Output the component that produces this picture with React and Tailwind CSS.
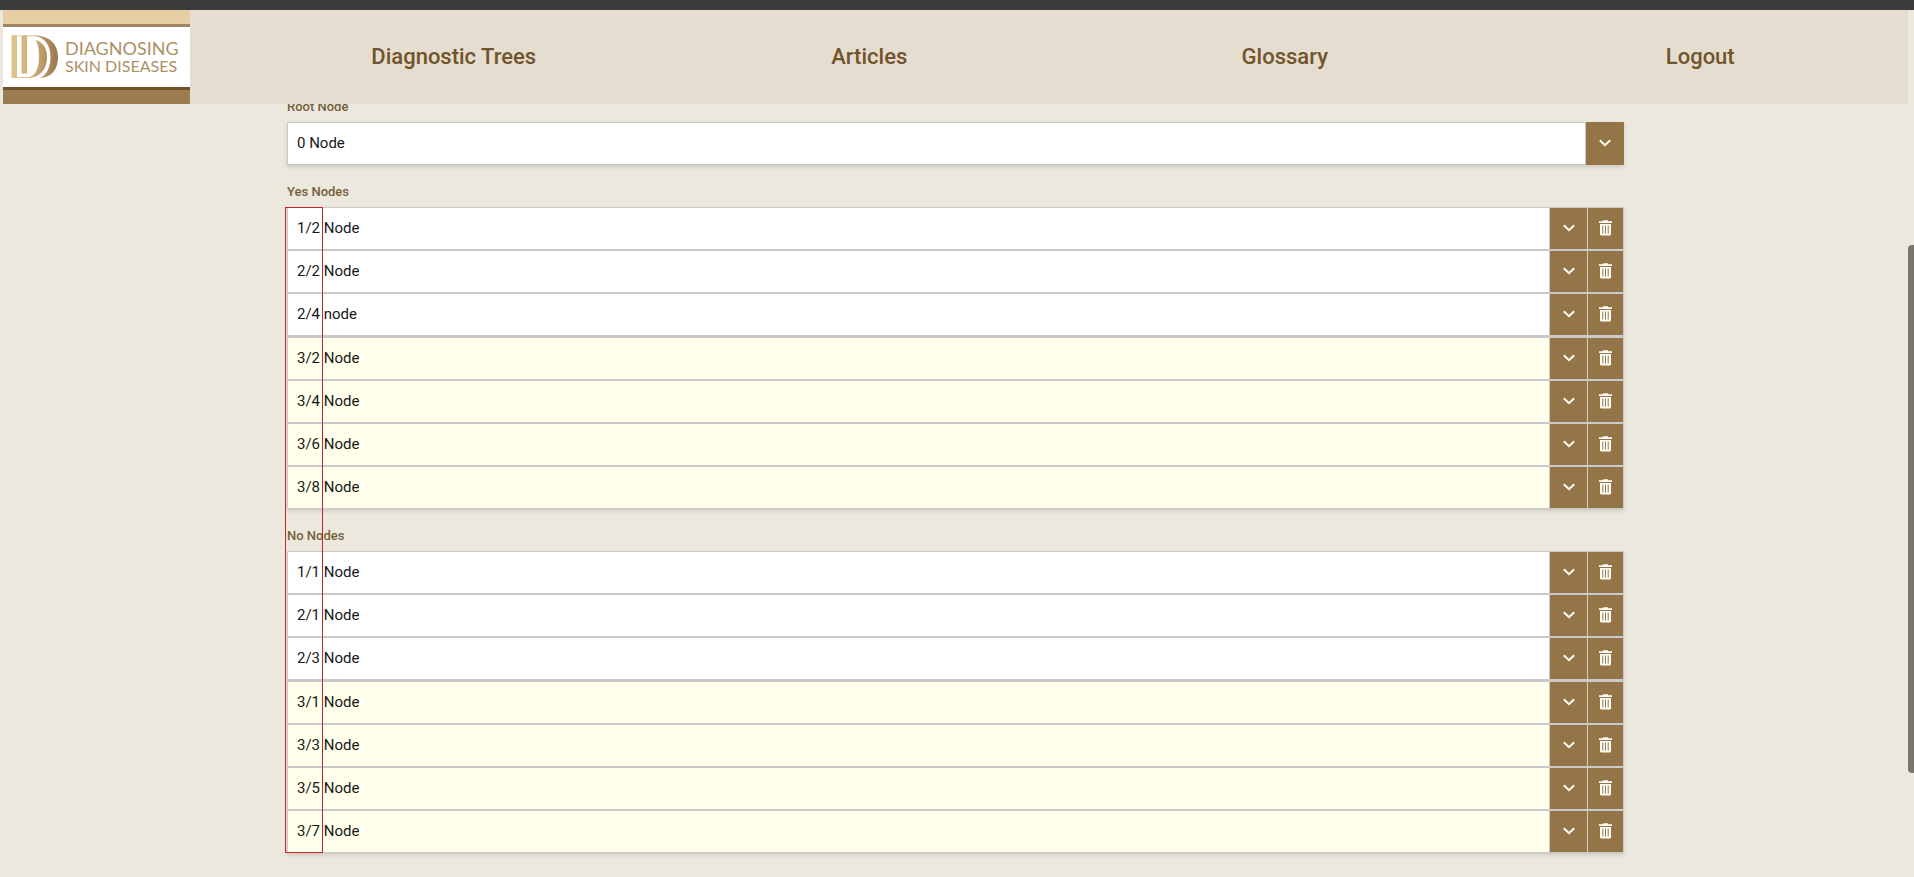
import React from "react";

const navItems = ["Diagnostic Trees", "Articles", "Glossary", "Logout"];

const yesNodes = {
  saved: ["1/2 Node", "2/2 Node", "2/4 node"],
  pending: ["3/2 Node", "3/4 Node", "3/6 Node", "3/8 Node"],
};

const noNodes = {
  saved: ["1/1 Node", "2/1 Node", "2/3 Node"],
  pending: ["3/1 Node", "3/3 Node", "3/5 Node", "3/7 Node"],
};

function ChevronIcon() {
  return (
    <svg width="12" height="8" viewBox="0 0 12 8" fill="none" stroke="#fffdf6" strokeWidth="1.9" aria-hidden="true">
      <path d="M0.800 1.200 L6 6.200 L11.200 1.200" />
    </svg>
  );
}

function TrashIcon() {
  return (
    <svg width="13" height="16" viewBox="0 0 13 16" fill="#fffdf6" aria-hidden="true">
      <path d="M4.300 0.300h4.400l0.600 1H13v1.700H0V1.300h3.700z" />
      <path
        fillRule="evenodd"
        d="M1 4h11v10a1.500 1.500 0 0 1-1.500 1.500h-8A1.500 1.500 0 0 1 1 14zM3.300 5.500v8h1v-8zM6 5.500v8h1v-8zM8.700 5.500v8h1v-8z"
      />
    </svg>
  );
}

function LogoMark() {
  return (
    <svg width="48" height="44" viewBox="0 0 48 44" aria-hidden="true">
      <defs>
        <linearGradient id="gold" gradientUnits="userSpaceOnUse" x1="0" x2="48" y1="0" y2="0">
          <stop offset="0" stopColor="#e2c48f" />
          <stop offset="0.5" stopColor="#c9aa76" />
          <stop offset="1" stopColor="#94754a" />
        </linearGradient>
      </defs>
      <g fill="url(#gold)">
        <path d="M0.500 0.500H6V43H0.500z" />
        <path d="M10.500 0.500H16V38.500H10.500z" />
        <path d="M0.500 0.500H26V1.200H0.500zM0.500 42.300H20V43H0.500z" />
        <path d="M24.500 5C32 7 36 13.500 36 22C36 34 29.500 42 18 43V42.300C25 40 28 32.500 28 22C28 14 27 8.500 24.500 5z" />
        <path d="M25 0.500C40 1.200 47 10.500 47 22C47 34.500 40.500 42.500 29 43C36 39.500 39.500 32 39.500 22C39.500 10.500 34 2.800 25 1.200z" />
      </g>
    </svg>
  );
}

function Logo() {
  return (
    <a
      href="#home"
      aria-label="Diagnosing Skin Diseases"
      className="flex h-[94px] w-[187px] shrink-0 flex-col"
    >
      <span className="h-[14px] bg-[#e6cfa5]" />
      <span className="h-[3px] bg-[#a08560]" />
      <span className="flex flex-1 items-center gap-[6px] bg-white pl-2">
        <LogoMark />
        <span className="flex flex-col font-[Lato,sans-serif] whitespace-nowrap text-[#ab9165]">
          <span className="text-[18px] leading-[17px]">DIAGNOSING</span>
          <span className="text-[16px] leading-[17px]">SKIN DISEASES</span>
        </span>
      </span>
      <span className="h-[3px] bg-[#72522c]" />
      <span className="h-[14px] bg-[#9b7b50]" />
    </a>
  );
}

function NodeRow({ name, pending, group }) {
  return (
    <li
      className={
        pending
          ? "flex h-[43px] border border-[#c9c9c9] bg-[#ffffeb]"
          : "flex h-[43px] border border-[#c9c9c9] bg-white"
      }
    >
      <input
        type="text"
        aria-label={`${group} ${name}`}
        defaultValue={name}
        className="min-w-0 flex-1 bg-transparent px-[9px] text-[15px] text-[#181818] outline-none"
      />
      <button
        type="button"
        aria-label={`Expand ${name}`}
        className="flex w-[38px] items-center justify-center border-l border-[#c9c9c9] bg-[#937547] pb-[2px]"
      >
        <ChevronIcon />
      </button>
      <button
        type="button"
        aria-label={`Delete ${name}`}
        className="flex w-9 items-center justify-center border-l border-[#d6cfc0] bg-[#937547] pb-[2px]"
      >
        <TrashIcon />
      </button>
    </li>
  );
}

function NodeList({ title, nodes }) {
  return (
    <section>
      <h2 className="mb-[5px] text-[13px] leading-5 font-medium text-[#75603b]">{title}</h2>
      <div className="flex flex-col gap-px bg-[#c9c9c9] shadow-[0_2px_4px_rgba(0,0,0,0.14)]">
        <ul>
          {nodes.saved.map((name) => (
            <NodeRow key={name} name={name} group={title} />
          ))}
        </ul>
        <ul>
          {nodes.pending.map((name) => (
            <NodeRow key={name} name={name} group={title} pending />
          ))}
        </ul>
      </div>
    </section>
  );
}

export default function App() {
  return (
    <div className="relative min-h-screen bg-[#ece8dd] font-[Roboto,sans-serif]">
      <div className="h-[10px] bg-[#3c3c3c]" />
      <div className="pr-[6px] pl-[3px]">
        <header className="relative z-10 flex bg-[#e5ddd0]">
          <Logo />
          <nav className="ml-14 grid flex-1 grid-cols-4 items-center">
            {navItems.map((item) => (
              <a key={item} href="#" className="text-center text-[22px] leading-8 font-medium text-[#72542b]">
                {item}
              </a>
            ))}
          </nav>
        </header>

        <main className="mx-auto -mt-[7px] flex w-full max-w-[1337px] flex-col gap-[17px] pb-6">
          <div>
            <label htmlFor="root-node" className="mb-[5px] block text-[13px] leading-5 font-medium text-[#75603b]">
              Root Node
            </label>
            <div className="flex h-[43px] shadow-[0_2px_4px_rgba(0,0,0,0.14)]">
              <input
                id="root-node"
                type="text"
                defaultValue="0 Node"
                className="min-w-0 flex-1 border border-[#c9c9c9] bg-white px-[9px] text-[15px] text-[#181818] outline-none"
              />
              <button
                type="button"
                aria-label="Expand root node"
                className="flex w-[38px] items-center justify-center bg-[#937547] pb-[2px]"
              >
                <ChevronIcon />
              </button>
            </div>
          </div>

          <div className="relative flex flex-col gap-[17px]">
            <NodeList title="Yes Nodes" nodes={yesNodes} />
            <NodeList title="No Nodes" nodes={noNodes} />
            <div className="pointer-events-none absolute top-[25px] bottom-0 -left-[2px] w-[38px] border border-[#c0272d]" />
          </div>
        </main>
      </div>
      <div className="absolute top-[245px] right-0 h-[528px] w-[6px] rounded-l-sm bg-[#787570]" />
    </div>
  );
}
